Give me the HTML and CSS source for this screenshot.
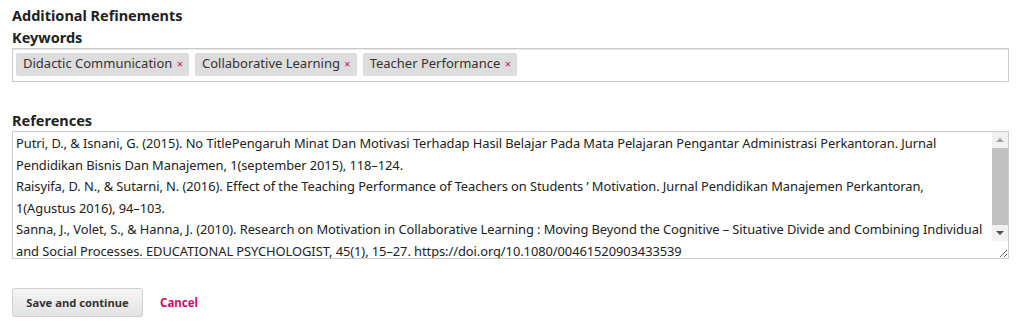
FILE: index.html
```html
<!DOCTYPE html>
<html>
<head>
  <title>Additional Refinements</title>
  <link rel="stylesheet" href="styles.css">
</head>
<body>
  <form class="submission">
    <h2 class="section-title">Additional Refinements</h2>

    <div class="field">
      <label class="label">Keywords</label>
      <ul class="tag-box">
        <li class="tag">Didactic Communication <span class="tag-remove">×</span></li>
        <li class="tag">Collaborative Learning <span class="tag-remove">×</span></li>
        <li class="tag">Teacher Performance <span class="tag-remove">×</span></li>
      </ul>
    </div>

    <div class="field refs">
      <label class="label" for="references">References</label>
      <div class="textarea-wrap">
        <textarea id="references" class="textarea">Putri, D., &amp; Isnani, G. (2015). No TitlePengaruh Minat Dan Motivasi Terhadap Hasil Belajar Pada Mata Pelajaran Pengantar Administrasi Perkantoran. Jurnal Pendidikan Bisnis Dan Manajemen, 1(september 2015), 118–124.
Raisyifa, D. N., &amp; Sutarni, N. (2016). Effect of the Teaching Performance of Teachers on Students ’ Motivation. Jurnal Pendidikan Manajemen Perkantoran, 1(Agustus 2016), 94–103.
Sanna, J., Volet, S., &amp; Hanna, J. (2010). Research on Motivation in Collaborative Learning : Moving Beyond the Cognitive – Situative Divide and Combining Individual and Social Processes. EDUCATIONAL PSYCHOLOGIST, 45(1), 15–27. https://doi.org/10.1080/00461520903433539
Schunk, D. H. (2012). Learning Theories: An Educational Perspective. Boston: Pearson.
Uno, H. B. (2011). Teori Motivasi dan Pengukurannya. Jakarta: Bumi Aksara.</textarea>
        <!-- drawn scrollbar, the screenshot browser hides native ones -->
        <div class="scrollbar">
          <span class="sb-btn"><span class="arrow-up"></span></span>
          <span class="sb-thumb"></span>
          <span class="sb-btn"><span class="arrow-down"></span></span>
        </div>
      </div>
    </div>

    <div class="actions">
      <button type="button" class="btn">Save and continue</button>
      <a href="#" class="cancel">Cancel</a>
    </div>
  </form>
</body>
</html>
```

FILE: styles.css
```css
body {
  font-family: "Noto Sans", sans-serif;
  color: #222;
  margin: 0;
  padding: 0;
  background: #fff;
}

.submission {
  margin: 0 15px 0 12px;
  padding-top: 4px;
}

.section-title {
  font-size: 14.5px;
  font-weight: bold;
  line-height: 22px;
  margin: 0;
}

.label {
  display: block;
  font-size: 14.5px;
  font-weight: bold;
  line-height: 22px;
}

.tag-box {
  list-style: none;
  margin: 0;
  padding: 4px 3px 5px;
  display: flex;
  gap: 6px;
  border: 1px solid #ccc;
  box-shadow: inset 0 1px 1px #e5e5e5;
  min-height: 23px;
}

.tag {
  background: #ddd;
  border-radius: 2px;
  font-size: 13px;
  line-height: 21px;
  padding: 0 6px 0 7px;
  color: #333;
}

.tag-remove {
  color: #d00a6c;
  font-size: 11px;
  margin-left: 1px;
}

.refs {
  margin-top: 27px;
}

.textarea-wrap {
  position: relative;
}

.textarea {
  display: block;
  box-sizing: border-box;
  width: 100%;
  height: 128px;
  margin: 0;
  padding: 1px 23px 1px 3px;
  border: 1px solid #ccc;
  font-family: "Noto Sans", sans-serif;
  font-size: 12.9px;
  letter-spacing: -0.07px;
  line-height: 21.5px;
  color: #222;
  resize: vertical;
}

.scrollbar {
  position: absolute;
  top: 1px;
  right: 1px;
  width: 16px;
  height: 109px;
  background: #f1f1f1;
  display: flex;
  flex-direction: column;
}

.sb-btn {
  height: 16px;
  display: flex;
  align-items: center;
  justify-content: center;
}

.sb-thumb {
  flex: 1;
  background: #c1c1c1;
}

.arrow-up {
  border-left: 4px solid transparent;
  border-right: 4px solid transparent;
  border-bottom: 4px solid #a3a3a3;
}

.arrow-down {
  border-left: 4px solid transparent;
  border-right: 4px solid transparent;
  border-top: 4px solid #505050;
}

.actions {
  display: flex;
  align-items: center;
  gap: 17px;
  margin-top: 29px;
}

.btn {
  font-family: "Noto Sans", sans-serif;
  font-size: 11.2px;
  font-weight: bold;
  color: #333;
  height: 29px;
  width: 131px;
  padding: 0;
  border: 1px solid #d0d0d0;
  border-radius: 3px;
  background: linear-gradient(#f5f5f5, #e3e3e3);
  box-shadow: 0 1px 0 #e8e8e8;
}

.cancel {
  font-size: 11.5px;
  font-weight: bold;
  color: #d00a6c;
  text-decoration: none;
}
```
